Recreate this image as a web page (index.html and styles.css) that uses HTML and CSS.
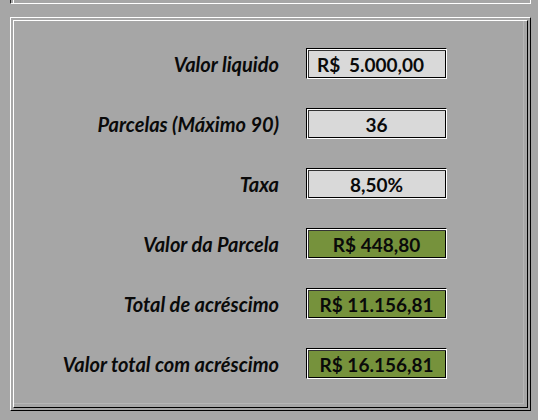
FILE: index.html
```html
<!DOCTYPE html>
<html lang="pt-BR">
<head>
<meta charset="utf-8">
<title>Simulação</title>
<link rel="stylesheet" href="styles.css">
</head>
<body>
<div class="top-strip"><div class="top-inner"></div></div>
<div class="panel">
  <div class="panel-inner">
    <div class="content">
      <div class="grid">
        <div class="label">Valor liquido</div>
        <div class="box gray acct"><span>R$</span><span>5.000,00</span></div>

        <div class="label">Parcelas (Máximo 90)</div>
        <div class="box gray">36</div>

        <div class="label">Taxa</div>
        <div class="box gray">8,50%</div>

        <div class="label">Valor da Parcela</div>
        <div class="box green">R$ 448,80</div>

        <div class="label">Total de acréscimo</div>
        <div class="box green">R$ 11.156,81</div>

        <div class="label">Valor total com acréscimo</div>
        <div class="box green">R$ 16.156,81</div>
      </div>
    </div>
  </div>
</div>
</body>
</html>
```
FILE: styles.css
```css
html, body {
  margin: 0;
  padding: 0;
  background: #a6a6a6;
}
body {
  width: 538px;
  height: 420px;
  overflow: hidden;
  font-family: Lato, "Liberation Sans", sans-serif;
  color: #0a0a0a;
}
.top-strip {
  box-sizing: border-box;
  margin-left: 10px;
  width: 521px;
  height: 4px;
  border-left: 1px solid #222;
  border-right: 1px solid #fff;
  border-bottom: 1px solid #fff;
  padding-left: 2px;
}
.top-inner {
  height: 3px;
  border-left: 1px solid #fff;
}
.panel {
  box-sizing: border-box;
  margin: 13px 0 0 10px;
  width: 521px;
  height: 394px;
  border: 1px solid;
  border-color: #fff #000 #000 #fff;
  padding: 2px;
}
.panel-inner {
  box-sizing: border-box;
  height: 100%;
  border: 1px solid;
  border-color: #fff #000 #000 #fff;
}
.content {
  box-sizing: border-box;
  height: calc(100% - 3px);
  margin-right: 3px;
  border-right: 1px solid #b6b6b6;
  border-bottom: 1px solid #b6b6b6;
  padding-top: 27px;
}
.grid {
  display: grid;
  grid-template-columns: 265px 141px;
  grid-auto-rows: 31px;
  column-gap: 27px;
  row-gap: 29px;
}
.label {
  align-self: center;
  text-align: right;
  font-style: italic;
  font-weight: 700;
  font-size: 20px;
  white-space: nowrap;
}
.box {
  box-sizing: border-box;
  display: flex;
  align-items: center;
  justify-content: center;
  border: 1px solid;
  border-color: #000 #fff #fff #000;
  box-shadow: inset 1px 1px 0 #fff, inset 2px 2px 0 #333, inset -1px -1px 0 #000;
  font-weight: 700;
  font-size: 19px;
  padding-top: 1px;
}
.gray {
  background: #d9d9d9;
}
.green {
  background: #76923c;
}
.acct {
  justify-content: space-between;
  padding-left: 10px;
  padding-right: 22px;
}
```
